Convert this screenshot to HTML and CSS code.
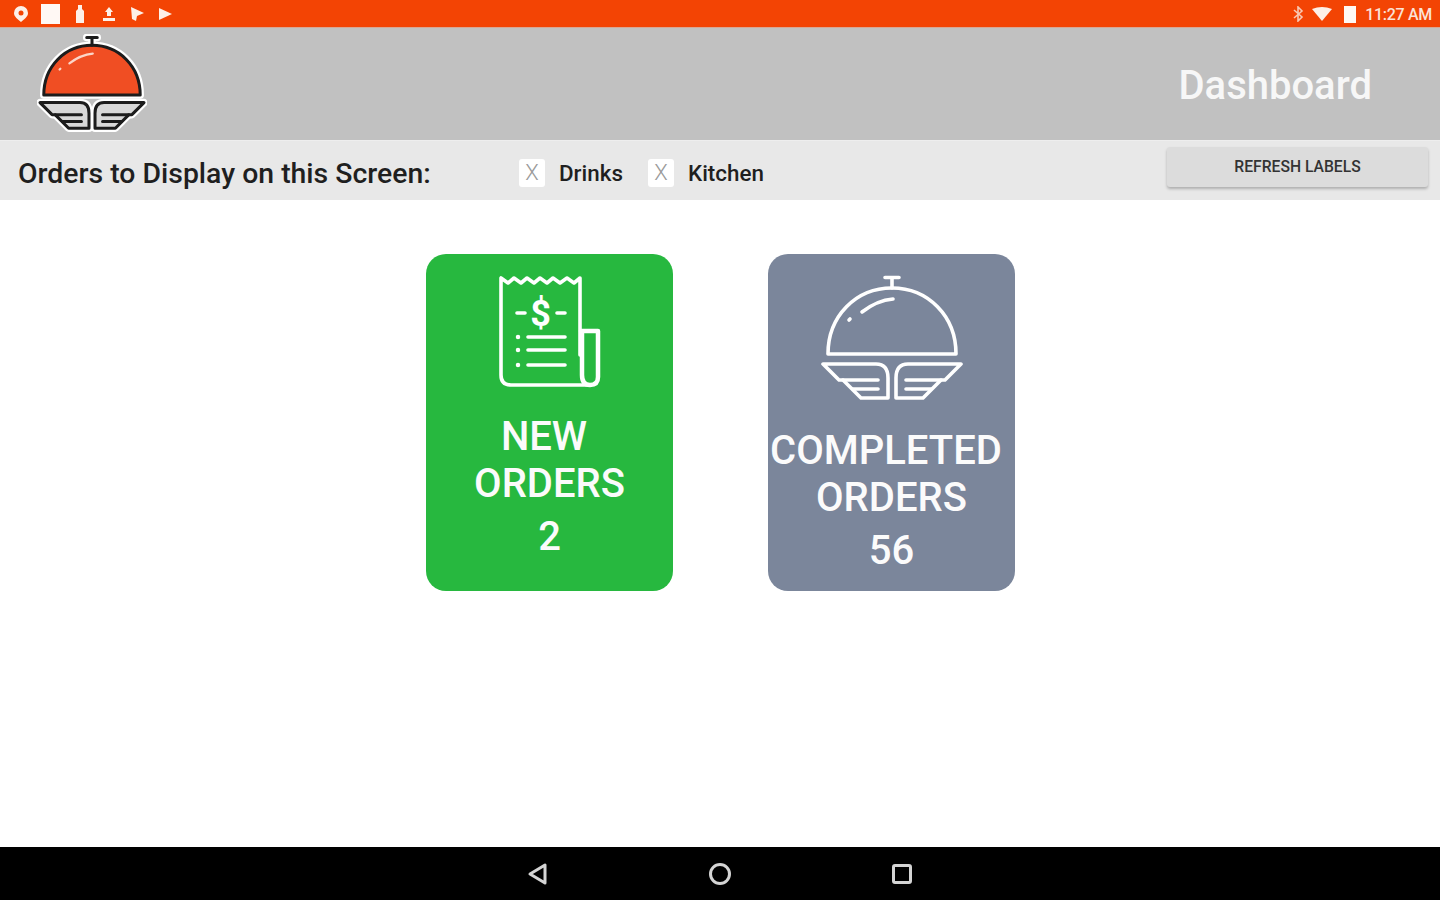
FILE: index.html
```html
<!DOCTYPE html>
<html lang="en">
<head>
    <meta charset="UTF-8">
    <title>Dashboard</title>
    <link rel="stylesheet" href="styles.css">
</head>
<body>
    <svg class="defs" width="0" height="0">
        <defs>
            <path id="dome" d="M7 79 C7 41 35 13 71 13 C107 13 135 41 135 79 Z"/>
            <path id="knob" d="M71 13 V3 M64 2.5 H78"/>
            <g id="wing">
                <path d="M2 89 H55 Q67 89 67 103 V123 H40 L22 105 H18 Z"/>
                <path d="M22 105 H57 M32 114 H57"/>
            </g>
        </defs>
    </svg>

    <div class="status-bar">
        <div class="status-icons">
            <svg width="16" height="18" viewBox="0 0 16 18"><path d="M8 1 A7 7 0 0 1 15 8 C15 12 11 14 8 17 C5 14 1 12 1 8 A7 7 0 0 1 8 1 Z"/><circle cx="8" cy="8" r="2.5" fill="#f34404"/></svg>
            <span class="status-square"></span>
            <svg width="10" height="20" viewBox="0 0 10 20"><path d="M3 1 H7 V5 L9 7 V19 H1 V7 L3 5 Z"/></svg>
            <svg class="status-upload" width="14" height="16" viewBox="0 0 14 16"><path d="M7 1 L11 6 H9 V10 H5 V6 H3 Z M1 12 H13 V15 H1 Z"/></svg>
            <svg width="16" height="16" viewBox="0 0 16 16"><path d="M2 1 L15 7 L8 10 L7 15 L3 13 Z"/></svg>
            <svg width="15" height="14" viewBox="0 0 15 14"><path d="M1 1 L14 7 L1 13 Z"/></svg>
        </div>
        <div class="status-right">
            <svg width="12" height="16" viewBox="0 0 12 16" class="bt"><path d="M2 4 L10 11 L6 15 V1 L10 5 L2 12"/></svg>
            <svg width="20" height="14" viewBox="0 0 20 14"><path d="M0 2 Q10 -2 20 2 L10 14 Z"/></svg>
            <span class="battery"></span>
            <span class="clock">11:27 AM</span>
        </div>
    </div>

    <header class="app-header">
        <svg class="logo" width="110" height="98" viewBox="-2 -2 146 130">
            <g class="logo-halo">
                <use href="#dome"/><use href="#knob"/>
                <use href="#wing"/><use href="#wing" transform="matrix(-1 0 0 1 142 0)"/>
            </g>
            <g class="logo-lines">
                <use href="#dome" class="logo-dome"/><use href="#knob"/>
                <path class="logo-shine" d="M72 24 C60 25 50 30 41 37 M28 45 L29 44"/>
                <use href="#wing" class="logo-wing"/><use href="#wing" class="logo-wing" transform="matrix(-1 0 0 1 142 0)"/>
            </g>
        </svg>
        <h1>Dashboard</h1>
    </header>

    <div class="filter-bar">
        <div class="filter-title">Orders to Display on this Screen:</div>
        <label class="filter-option"><span class="check">X</span>Drinks</label>
        <label class="filter-option"><span class="check">X</span>Kitchen</label>
        <button type="button" class="refresh-btn">REFRESH LABELS</button>
    </div>

    <main class="dashboard">
        <div class="card card-new">
            <svg class="card-icon receipt" width="102" height="114" viewBox="0 0 102 114">
                <path d="M81 80 V3 L75 8 L68 3 L61 8 L54 3 L48 8 L41 3 L35 8 L28 3 L22 8 L15 3 L9 8 L2 3 V100 Q2 110 12 110 H91"/>
                <path class="thick" d="M83 56 V100 Q83 110 91 110 Q99 110 99 102 V56 H82"/>
                <path d="M18 38 H26 M58 38 H66 M29 62 H66 M29 75 H66 M29 90 H66"/>
                <path class="dots" d="M19 62 V62.1 M19 75 V75.1 M19 90 V90.1"/>
                <text x="41.5" y="51" class="dollar">$</text>
            </svg>
            <div class="card-title"><span class="shift">NEW</span><br>ORDERS</div>
            <div class="card-count">2</div>
        </div>
        <div class="card card-done">
            <svg class="card-icon cloche" width="142" height="127" viewBox="0 0 142 127">
                <use href="#dome"/><use href="#knob"/>
                <path d="M72 24 C60 25 50 30 41 37 M28 45 L29 44"/>
                <use href="#wing"/><use href="#wing" transform="matrix(-1 0 0 1 142 0)"/>
            </svg>
            <div class="card-title"><span class="shift">COMPLETED</span><br>ORDERS</div>
            <div class="card-count">56</div>
        </div>
    </main>

    <nav class="nav-bar">
        <svg width="24" height="24" viewBox="0 0 24 24"><path d="M19 3 V21 L4 12 Z"/></svg>
        <svg width="24" height="24" viewBox="0 0 24 24"><circle cx="12" cy="12" r="9.5"/></svg>
        <svg width="24" height="24" viewBox="0 0 24 24"><rect x="3.5" y="3.5" width="17" height="17" rx="1.5"/></svg>
    </nav>
</body>
</html>
```

FILE: styles.css
```css
* {
    box-sizing: border-box;
}
body {
    font-family: Roboto, "Liberation Sans", sans-serif;
    background-color: white;
    margin: 0;
    height: 100vh;
    display: flex;
    flex-direction: column;
    overflow: hidden;
}
.defs {
    display: block;
    height: 0;
}

/* status bar */
.status-bar {
    height: 28px;
    flex: none;
    background-color: #f34404;
    border-bottom: 1px solid #d9a794;
    display: flex;
    align-items: center;
    justify-content: space-between;
    padding: 1px 8px 0 13px;
}
.status-bar svg {
    fill: #fdf0e8;
    display: block;
}
.status-icons {
    display: flex;
    align-items: center;
    gap: 13px;
}
.status-square {
    width: 19px;
    height: 20px;
    margin-left: -1px;
    margin-right: 2px;
    background-color: #fff8f4;
}
.status-icons .status-upload {
    margin-left: 4px;
}
.status-right {
    display: flex;
    align-items: center;
}
.status-right .bt {
    fill: none;
    stroke: #f8c9b4;
    stroke-width: 1.6;
    margin-right: 8px;
}
.battery {
    width: 12px;
    height: 17px;
    margin: 0 9px 0 12px;
    background-color: #fff8f4;
}
.clock {
    color: #fbe3d8;
    font-size: 16px;
    font-weight: 500;
    letter-spacing: -0.3px;
}

/* header */
.app-header {
    height: 112px;
    flex: none;
    background-color: #c1c1c1;
    display: flex;
    align-items: center;
    justify-content: space-between;
    padding: 0 68px 0 37px;
}
.logo {
    margin-top: -3px;
    fill: none;
    stroke-linejoin: round;
    stroke-linecap: round;
}
.logo-halo {
    fill: white;
    stroke: white;
    stroke-width: 10;
}
.logo-lines {
    stroke: #1c1c1c;
    stroke-width: 4;
}
.logo-dome {
    fill: #f04e23;
}
.logo-wing {
    fill: #d8d8d8;
}
.logo-shine {
    stroke: #fbd5c8;
    stroke-width: 3;
}
.app-header h1 {
    margin: 2px 0 0;
    color: #f7f7f7;
    font-size: 40px;
    font-weight: 500;
}

/* filter row */
.filter-bar {
    height: 60px;
    flex: none;
    background-color: #e8e8e8;
    border-top: 1px solid #eeeeee;
    display: flex;
    align-items: center;
    padding: 0 12px 0 18px;
    color: #1f1f1f;
}
.filter-title {
    width: 501px;
    margin-top: 6px;
    font-size: 28.4px;
    font-weight: 500;
    white-space: nowrap;
}
.filter-option {
    display: flex;
    align-items: center;
    width: 129px;
    margin-top: 5px;
    font-size: 22.4px;
    font-weight: 500;
}
.check {
    width: 26px;
    height: 28px;
    margin-right: 14px;
    background-color: white;
    border-radius: 3px;
    color: #9a9a9a;
    font-size: 22px;
    font-weight: 300;
    text-align: center;
    line-height: 28px;
}
.refresh-btn {
    width: 261px;
    height: 40px;
    margin-left: auto;
    margin-top: -8px;
    background-color: #dcdcdc;
    border: none;
    border-radius: 3px;
    box-shadow: 0 2px 3px rgba(0, 0, 0, 0.25);
    color: #333333;
    font-family: inherit;
    font-size: 15.7px;
    font-weight: 500;
}

/* cards */
.dashboard {
    flex: 1;
    display: flex;
    justify-content: center;
    align-items: flex-start;
    gap: 95px;
    padding-top: 54px;
    padding-left: 1px;
}
.card {
    width: 247px;
    height: 337px;
    border-radius: 20px;
    padding-top: 21px;
    display: flex;
    flex-direction: column;
    align-items: center;
    color: #fbfbfb;
    text-align: center;
}
.card-new {
    background-color: #27b83f;
}
.card-done {
    background-color: #7b869b;
}
.card-icon {
    flex: none;
    fill: none;
    stroke: white;
    stroke-width: 3.6;
    stroke-linejoin: round;
    stroke-linecap: round;
}
.receipt {
    margin-bottom: 24px;
}
.receipt .thick {
    stroke-width: 4.5;
}
.receipt .dots {
    stroke-width: 4.5;
}
.receipt .dollar {
    fill: white;
    stroke: none;
    font-size: 36px;
    font-weight: 700;
    text-anchor: middle;
}
.cloche {
    margin-bottom: 25px;
}
.card-title {
    font-size: 40px;
    font-weight: 500;
    line-height: 47px;
    white-space: nowrap;
}
.shift {
    padding-right: 11px;
}
.card-count {
    margin-top: 6px;
    font-size: 40px;
    font-weight: 500;
    line-height: 47px;
}

/* bottom nav */
.nav-bar {
    height: 53px;
    flex: none;
    background-color: black;
    display: flex;
    align-items: center;
    justify-content: center;
    gap: 158px;
}
.nav-bar svg {
    fill: none;
    stroke: #d4d4d4;
    stroke-width: 3;
    stroke-linejoin: round;
}
```
